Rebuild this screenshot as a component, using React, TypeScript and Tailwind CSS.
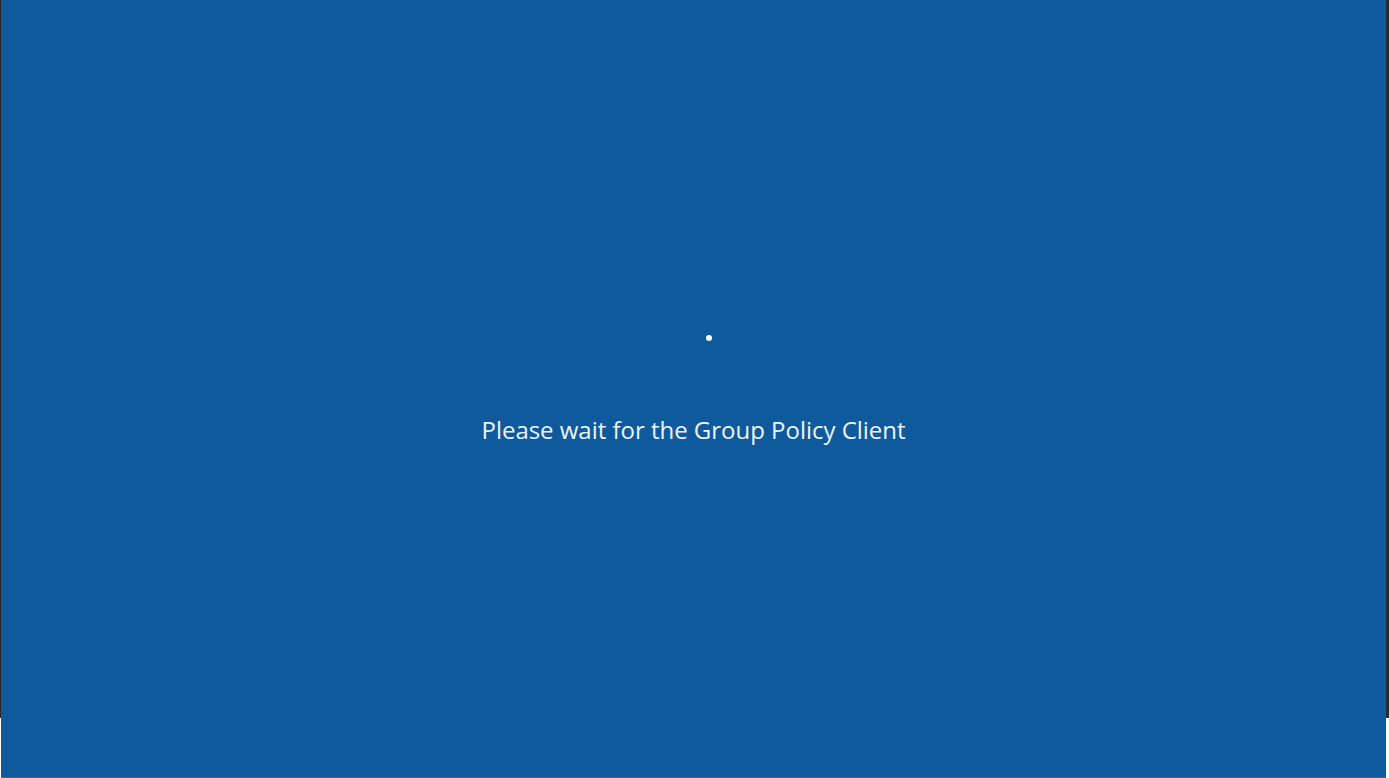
export default function App() {
  return (
    <div className="w-[1389px] h-[778px] flex flex-col bg-white overflow-hidden">
      {/* main screen with dark frame */}
      <div className="h-[718px] flex bg-[#2b2b2b]">
        <div className="ml-px mr-[3px] flex-1 bg-[#0f5a9c] flex flex-col items-center pt-[335px]">
          <div className="w-[6px] h-[6px] rounded-full bg-white translate-x-[15px]" />
          <p
            className="mt-[77px] text-[24px] leading-none text-[#eef3f8] tracking-[-0.02px]"
            style={{ fontFamily: '"Open Sans", "Noto Sans", sans-serif' }}
          >
            Please wait for the Group Policy Client
          </p>
        </div>
      </div>
      {/* lower strip */}
      <div className="flex-1 flex flex-col ml-px mr-[3px] bg-[#0f5a9c]">
        <div className="flex-1" />
        <div className="h-px bg-[#2a6fae]" />
      </div>
    </div>
  );
}
